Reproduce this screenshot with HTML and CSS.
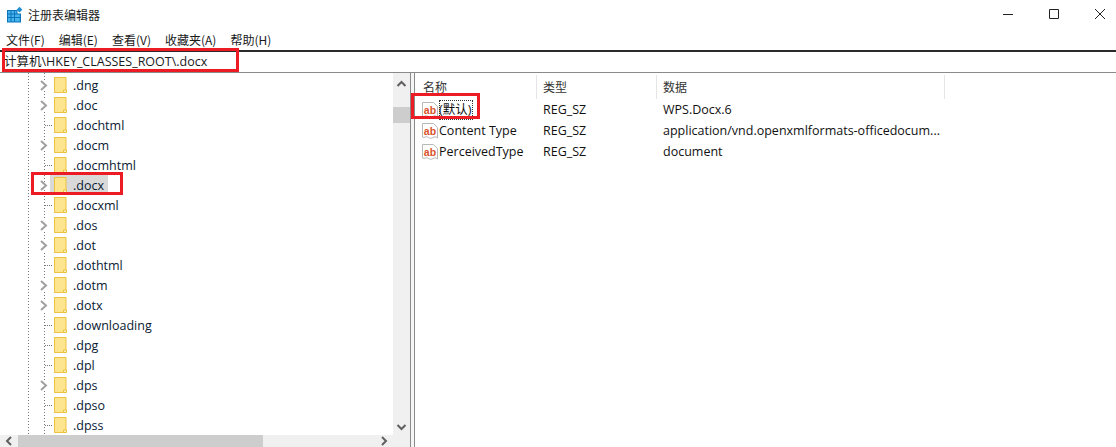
FILE: index.html
```html
<!DOCTYPE html>
<html lang="zh-CN">
<head>
<meta charset="utf-8">
<title>注册表编辑器</title>
<link rel="stylesheet" href="styles.css">
</head>
<body>
<div class="window">
  <header class="titlebar">
    <svg class="appicon" width="18" height="18" viewBox="0 0 18 18">
      <path fill="#0b72bb" d="M1 4h10.500v3.500H15V16.500H1z"/>
      <path fill="#45b4ea" d="M2 5h2.500v2.500H2zM5.500 5H8v2.500H5.500zM9 5h1.500v2.500H9zM2 8.500h2.500V11H2zM5.500 8.500H8V11H5.500zM9 8.500h4.800V11H9zM2 12h2.500v3.500H2zM5.500 12H8v3.500H5.500zM9 12h4.800v3.500H9z"/>
      <path fill="#1f8fd2" d="M13.500.8l2.900 2.900-2.900 2.900-2.900-2.900z"/>
    </svg>
    <span class="apptitle">注册表编辑器</span>
    <div class="winbtns">
      <svg width="46" height="30" viewBox="0 0 46 30"><path stroke="#222" fill="none" d="M18 14.500h10"/></svg>
      <svg width="46" height="30" viewBox="0 0 46 30"><path stroke="#222" fill="none" d="M18.500 9.500h9v9h-9z"/></svg>
      <svg width="46" height="30" viewBox="0 0 46 30"><path stroke="#222" fill="none" d="M18 9l10 10M28 9L18 19"/></svg>
    </div>
  </header>
  <nav class="menubar">
    <span>文件(F)</span><span>编辑(E)</span><span>查看(V)</span><span>收藏夹(A)</span><span>帮助(H)</span>
  </nav>
  <div class="address">计算机\HKEY_CLASSES_ROOT\.docx</div>
  <main class="panes">
    <section class="treepane">
      <div class="treeview">
        <div class="treebody">
          <div class="row"><svg class="chev" viewBox="0 0 9 11"><path d="M2 1l5 4.500L2 10"/></svg><svg class="folder" viewBox="0 0 13 16"><path class="f1" d="M.5.5h11.500v15H.5z"/><path class="f2" d="M9.500 15.500v-2.500h3v2.500z"/></svg><span class="name">.dng</span></div>
          <div class="row"><svg class="chev" viewBox="0 0 9 11"><path d="M2 1l5 4.500L2 10"/></svg><svg class="folder" viewBox="0 0 13 16"><path class="f1" d="M.5.5h11.500v15H.5z"/><path class="f2" d="M9.500 15.500v-2.500h3v2.500z"/></svg><span class="name">.doc</span></div>
          <div class="row leaf"><svg class="folder" viewBox="0 0 13 16"><path class="f1" d="M.5.5h11.500v15H.5z"/><path class="f2" d="M9.500 15.500v-2.500h3v2.500z"/></svg><span class="name">.dochtml</span></div>
          <div class="row"><svg class="chev" viewBox="0 0 9 11"><path d="M2 1l5 4.500L2 10"/></svg><svg class="folder" viewBox="0 0 13 16"><path class="f1" d="M.5.5h11.500v15H.5z"/><path class="f2" d="M9.500 15.500v-2.500h3v2.500z"/></svg><span class="name">.docm</span></div>
          <div class="row leaf"><svg class="folder" viewBox="0 0 13 16"><path class="f1" d="M.5.5h11.500v15H.5z"/><path class="f2" d="M9.500 15.500v-2.500h3v2.500z"/></svg><span class="name">.docmhtml</span></div>
          <div class="row selected"><svg class="chev" viewBox="0 0 9 11"><path d="M2 1l5 4.500L2 10"/></svg><svg class="folder" viewBox="0 0 13 16"><path class="f1" d="M.5.5h11.500v15H.5z"/><path class="f2" d="M9.500 15.500v-2.500h3v2.500z"/></svg><span class="name">.docx</span></div>
          <div class="row leaf"><svg class="folder" viewBox="0 0 13 16"><path class="f1" d="M.5.5h11.500v15H.5z"/><path class="f2" d="M9.500 15.500v-2.500h3v2.500z"/></svg><span class="name">.docxml</span></div>
          <div class="row"><svg class="chev" viewBox="0 0 9 11"><path d="M2 1l5 4.500L2 10"/></svg><svg class="folder" viewBox="0 0 13 16"><path class="f1" d="M.5.5h11.500v15H.5z"/><path class="f2" d="M9.500 15.500v-2.500h3v2.500z"/></svg><span class="name">.dos</span></div>
          <div class="row"><svg class="chev" viewBox="0 0 9 11"><path d="M2 1l5 4.500L2 10"/></svg><svg class="folder" viewBox="0 0 13 16"><path class="f1" d="M.5.5h11.500v15H.5z"/><path class="f2" d="M9.500 15.500v-2.500h3v2.500z"/></svg><span class="name">.dot</span></div>
          <div class="row leaf"><svg class="folder" viewBox="0 0 13 16"><path class="f1" d="M.5.5h11.500v15H.5z"/><path class="f2" d="M9.500 15.500v-2.500h3v2.500z"/></svg><span class="name">.dothtml</span></div>
          <div class="row"><svg class="chev" viewBox="0 0 9 11"><path d="M2 1l5 4.500L2 10"/></svg><svg class="folder" viewBox="0 0 13 16"><path class="f1" d="M.5.5h11.500v15H.5z"/><path class="f2" d="M9.500 15.500v-2.500h3v2.500z"/></svg><span class="name">.dotm</span></div>
          <div class="row"><svg class="chev" viewBox="0 0 9 11"><path d="M2 1l5 4.500L2 10"/></svg><svg class="folder" viewBox="0 0 13 16"><path class="f1" d="M.5.5h11.500v15H.5z"/><path class="f2" d="M9.500 15.500v-2.500h3v2.500z"/></svg><span class="name">.dotx</span></div>
          <div class="row leaf"><svg class="folder" viewBox="0 0 13 16"><path class="f1" d="M.5.5h11.500v15H.5z"/><path class="f2" d="M9.500 15.500v-2.500h3v2.500z"/></svg><span class="name">.downloading</span></div>
          <div class="row leaf"><svg class="folder" viewBox="0 0 13 16"><path class="f1" d="M.5.5h11.500v15H.5z"/><path class="f2" d="M9.500 15.500v-2.500h3v2.500z"/></svg><span class="name">.dpg</span></div>
          <div class="row leaf"><svg class="folder" viewBox="0 0 13 16"><path class="f1" d="M.5.5h11.500v15H.5z"/><path class="f2" d="M9.500 15.500v-2.500h3v2.500z"/></svg><span class="name">.dpl</span></div>
          <div class="row"><svg class="chev" viewBox="0 0 9 11"><path d="M2 1l5 4.500L2 10"/></svg><svg class="folder" viewBox="0 0 13 16"><path class="f1" d="M.5.5h11.500v15H.5z"/><path class="f2" d="M9.500 15.500v-2.500h3v2.500z"/></svg><span class="name">.dps</span></div>
          <div class="row leaf"><svg class="folder" viewBox="0 0 13 16"><path class="f1" d="M.5.5h11.500v15H.5z"/><path class="f2" d="M9.500 15.500v-2.500h3v2.500z"/></svg><span class="name">.dpso</span></div>
          <div class="row leaf"><svg class="folder" viewBox="0 0 13 16"><path class="f1" d="M.5.5h11.500v15H.5z"/><path class="f2" d="M9.500 15.500v-2.500h3v2.500z"/></svg><span class="name">.dpss</span></div>
        </div>
        <div class="vscroll">
          <svg width="17" height="17" viewBox="0 0 17 17"><path class="arrow" d="M4.500 10l4-4 4 4"/></svg>
          <div class="vtrack"><div class="vthumb"></div></div>
          <svg width="17" height="17" viewBox="0 0 17 17"><path class="arrow" d="M4.500 7l4 4 4-4"/></svg>
        </div>
      </div>
      <div class="hscroll">
        <svg width="18" height="12" viewBox="0 0 18 12"><path class="arrow" d="M11 2L7 6l4 4"/></svg>
        <div class="hthumb"></div>
        <div class="htrack"></div>
        <svg width="18" height="12" viewBox="0 0 18 12"><path class="arrow" d="M7 2l4 4-4 4"/></svg>
        <div class="hcorner"></div>
      </div>
    </section>
    <div class="splitter"></div>
    <section class="listpane">
      <div class="listhead">
        <div class="col c1">名称</div>
        <div class="col c2">类型</div>
        <div class="col c3">数据</div>
      </div>
      <div class="listrow">
        <div class="c1 cell">
          <svg class="ab" viewBox="0 0 18 18"><path class="abbg" d="M1.500 1.500h11l4 4v10.500c-2-1.500-3-1.500-4.500-.5s-3 1-4.500 0-3-1-4.500 0l-1.500-.5z"/><text x="2.800" y="12.500" class="abtxt">ab</text></svg>
          <span class="focus">(默认)</span>
        </div>
        <div class="c2 cell">REG_SZ</div>
        <div class="c3 cell">WPS.Docx.6</div>
      </div>
      <div class="listrow">
        <div class="c1 cell">
          <svg class="ab" viewBox="0 0 18 18"><path class="abbg" d="M1.500 1.500h11l4 4v10.500c-2-1.500-3-1.500-4.500-.5s-3 1-4.500 0-3-1-4.500 0l-1.500-.5z"/><text x="2.800" y="12.500" class="abtxt">ab</text></svg>
          <span class="plain">Content Type</span>
        </div>
        <div class="c2 cell">REG_SZ</div>
        <div class="c3 cell">application/vnd.openxmlformats-officedocum...</div>
      </div>
      <div class="listrow">
        <div class="c1 cell">
          <svg class="ab" viewBox="0 0 18 18"><path class="abbg" d="M1.500 1.500h11l4 4v10.500c-2-1.500-3-1.500-4.500-.5s-3 1-4.500 0-3-1-4.500 0l-1.500-.5z"/><text x="2.800" y="12.500" class="abtxt">ab</text></svg>
          <span class="plain">PerceivedType</span>
        </div>
        <div class="c2 cell">REG_SZ</div>
        <div class="c3 cell">document</div>
      </div>
    </section>
  </main>
  <div class="mark mark-address"></div>
  <div class="mark mark-tree"></div>
  <div class="mark mark-value"></div>
</div>
</body>
</html>
```
FILE: styles.css
```css
* { box-sizing: border-box; }
html, body { margin: 0; padding: 0; background: #fff; }
body { font-family: "Noto Sans CJK SC", sans-serif; overflow: hidden; }
.window {
  position: relative;
  width: 1116px;
  height: 447px;
  display: flex;
  flex-direction: column;
  color: #1a1a1a;
  font-family: "Open Sans", "Noto Sans CJK SC", sans-serif;
  font-size: 12px;
  overflow: hidden;
}
.titlebar { height: 30px; display: flex; align-items: center; padding-left: 6px; }
.appicon { flex: none; }
.apptitle { margin-left: 4px; margin-bottom: 2px; font-family: "Noto Sans CJK SC", sans-serif; font-size: 12px; }
.winbtns { margin-left: auto; margin-right: -7px; display: flex; gap: 0; }
.winbtns svg { display: block; flex: none; }
.menubar { height: 20px; display: flex; gap: 14px; padding-left: 6px; padding-bottom: 2px; align-items: center; font-size: 12px; font-family: "Noto Sans CJK SC", sans-serif; }
.address {
  height: 23px;
  border-top: 2px solid #2b2b2b;
  border-bottom: 1px solid #8a8a8a;
  padding-left: 4px;
  line-height: 20px;
  font-size: 12.500px;
  font-family: "Open Sans", "Noto Sans CJK SC", sans-serif;
}
.panes { flex: 1; display: flex; min-height: 0; }
.treepane { width: 410px; display: flex; flex-direction: column; }
.treeview { flex: 1; display: flex; min-height: 0; }
.treebody {
  flex: 1;
  padding-top: 2px;
  background-image:
    repeating-linear-gradient(#777 0 1px, transparent 1px 3px),
    repeating-linear-gradient(#777 0 1px, transparent 1px 3px);
  background-size: 1px 100%, 1px 100%;
  background-position: 28px 0, 44px 0;
  background-repeat: no-repeat;
  overflow: hidden;
}
.row { height: 20px; display: flex; align-items: center; padding-left: 39px; position: relative; font-size: 12.500px; color: #0b1a33; }
.row .chev { width: 9px; height: 11px; fill: none; stroke: #a0a0a0; stroke-width: 2; flex: none; background: #fff; }
.row .folder { width: 13px; height: 16px; margin-left: 6px; flex: none; }
.row.leaf .folder { margin-left: 15px; }
.row.leaf::before {
  content: "";
  position: absolute;
  left: 45px;
  top: 10px;
  width: 7px;
  border-top: 1px dotted #777;
}
.f1 { fill: #fde58f; stroke: #edc23f; stroke-width: 1; }
.f2 { fill: #fff2bf; stroke: #edc23f; stroke-width: 1; }
.name { margin-left: 5px; margin-top: 2px; padding: 0 2px 0 1px; line-height: 20px; }
.row.selected::before {
  content: "";
  position: absolute;
  left: 50px;
  top: 0;
  width: 58px;
  height: 20px;
  background: #d9d9d9;
}
.row.selected > * { position: relative; }
.row.selected .chev { background: transparent; }
.vscroll { width: 17px; background: #f0f0f0; display: flex; flex-direction: column; margin-left: -1px; padding-top: 3px; }
.vscroll svg { display: block; flex: none; }
.vtrack { flex: 1; }
.vthumb { margin-top: 14px; height: 16px; background: #cdcdcd; }
.arrow { fill: none; stroke: #606060; stroke-width: 2; }
.hscroll { height: 12px; display: flex; background: #f0f0f0; }
.hscroll svg { flex: none; display: block; }
.hthumb { width: 245px; background: #cdcdcd; }
.htrack { flex: 1; }
.hcorner { width: 17px; background: #f0f0f0; }
.splitter { width: 5px; border-left: 1px solid #8a8a8a; border-right: 1px solid #8a8a8a; background: #f5f5f5; }
.listpane { flex: 1; min-width: 0; font-size: 12.500px; color: #111; }
.listhead { height: 26px; padding-top: 2px; display: flex; align-items: center; color: #333; font-family: "Noto Sans CJK SC", sans-serif; font-size: 12px; }
.col { height: 24px; line-height: 24px; padding-left: 6px; border-right: 1px solid #e5e5e5; }
.col.c1 { padding-left: 8px; }
.c1 { width: 122px; flex: none; }
.c2 { width: 120px; flex: none; }
.c3 { width: 288px; flex: none; }
.listrow { height: 21px; display: flex; align-items: center; }
.cell { display: flex; align-items: center; white-space: nowrap; }
.c2.cell, .c3.cell { padding-left: 6px; }
.c1.cell { padding-left: 6px; }
.ab { width: 18px; height: 18px; flex: none; }
.abbg { fill: #fff; stroke: #b8b8b8; stroke-width: 1; }
.abtxt { font-family: "Liberation Sans", sans-serif; font-size: 10.500px; font-weight: 700; fill: #d9512a; }
.focus { outline: 1px dotted #333; outline-offset: -1px; padding: 0 2px 0 0; line-height: 20px; font-family: "Open Sans", "Noto Sans CJK SC", sans-serif; }
.mark { position: absolute; border: 3px solid #ed1c24; pointer-events: none; }
.mark-address { left: 2px; top: 48px; width: 237px; height: 24px; }
.mark-tree { left: 31px; top: 172px; width: 92px; height: 23px; }
.mark-value { left: 411px; top: 93px; width: 69px; height: 26px; }
```
